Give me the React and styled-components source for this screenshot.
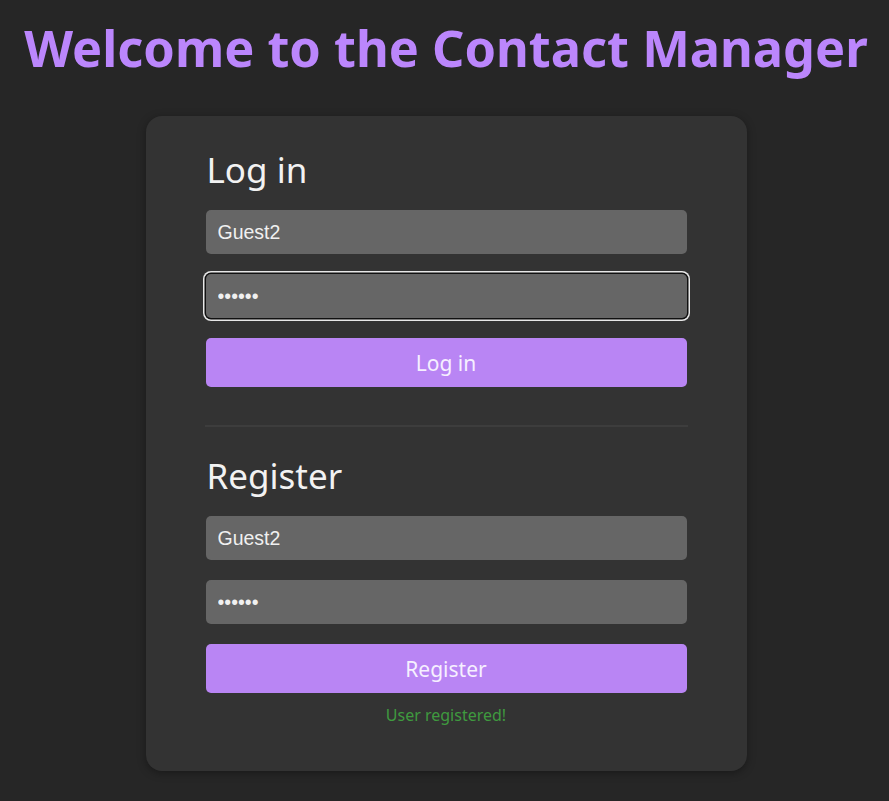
import React from 'react';
import styled, { createGlobalStyle } from 'styled-components';

const GlobalStyle = createGlobalStyle`
  body {
    margin: 0;
    background: #262626;
    font-family: "Noto Sans", "Open Sans", sans-serif;
  }
`;

const Page = styled.div`
  display: flex;
  flex-direction: column;
  align-items: center;
  padding: 14px 0 30px 3px;
`;

const Title = styled.h1`
  margin: 0;
  color: #bb86fc;
  font-size: 50.5px;
  line-height: 68px;
  font-weight: 700;
`;

const Card = styled.div`
  margin-top: 34px;
  width: 601px;
  box-sizing: border-box;
  padding: 30px 60px 46px;
  background: #333333;
  border-radius: 16px;
  box-shadow: 0 2px 8px rgba(0, 0, 0, 0.35);
  display: flex;
  flex-direction: column;
`;

const Heading = styled.h2`
  margin: 0 0 16px;
  color: #f2f2f2;
  font-size: 35px;
  line-height: 48px;
  font-weight: 400;
  padding-left: 1px;
`;

const Input = styled.input`
  display: block;
  width: 100%;
  height: 44px;
  box-sizing: border-box;
  margin: 0 0 20px;
  padding: 0 12px;
  border: none;
  border-radius: 5px;
  background: #666666;
  color: #f0f0f0;
  font-family: "Liberation Sans", Arial, sans-serif;
  font-size: 19.5px;
  outline: none;
  box-shadow: ${p => (p.$focused ? '0 0 0 1.5px #111, 0 0 0 3px #e8e8e8' : 'none')};
`;

const Button = styled.button`
  display: block;
  width: 100%;
  height: 49px;
  margin: 0;
  border: none;
  border-radius: 5px;
  background: #b985f4;
  color: #f6f0ff;
  font-family: "Noto Sans", sans-serif;
  font-size: 21px;
`;

const Divider = styled.hr`
  margin: 38px -1px 25px;
  border: none;
  height: 2px;
  background: #3d3d3d;
`;

const Message = styled.p`
  margin: 12px 0 0;
  text-align: center;
  color: #3f9a3f;
  font-size: 16px;
  line-height: 20px;
`;

export default function App() {
  return (
    <Page>
      <GlobalStyle />
      <Title>Welcome to the Contact Manager</Title>
      <Card>
        <Heading>Log in</Heading>
        <Input type="text" defaultValue="Guest2" />
        <Input type="password" defaultValue="secret" $focused />
        <Button>Log in</Button>
        <Divider />
        <Heading>Register</Heading>
        <Input type="text" defaultValue="Guest2" />
        <Input type="password" defaultValue="secret" />
        <Button>Register</Button>
        <Message>User registered!</Message>
      </Card>
    </Page>
  );
}
